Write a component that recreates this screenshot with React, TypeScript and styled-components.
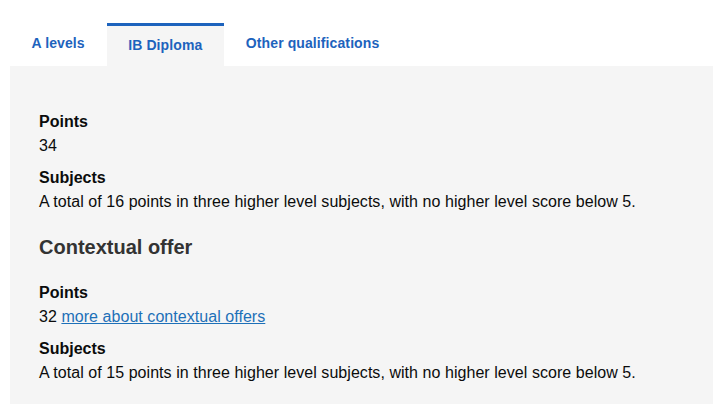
import React from 'react'
import styled, { createGlobalStyle } from 'styled-components'

const GlobalStyle = createGlobalStyle`
  body {
    margin: 0;
    background: #ffffff;
    font-family: 'Liberation Sans', Arial, sans-serif;
    color: #0b0c0c;
  }
`

const Wrapper = styled.div`
  padding: 23px 0 0 10px;
`

const TabList = styled.ul`
  display: flex;
  align-items: flex-start;
  list-style: none;
  margin: 0;
  padding: 0;
`

const Tab = styled.li<{ active?: boolean }>`
  box-sizing: border-box;
  padding: ${({ active }) => (active ? '11px 22px 13px 21.5px' : '12px 22px 0 21.5px')};
  height: ${({ active }) => (active ? '43px' : '38px')};
  border-top: ${({ active }) => (active ? '3px solid #1d63bd' : '0')};
  background: ${({ active }) => (active ? '#f5f5f5' : 'transparent')};
  font-size: 14px;
  line-height: 16px;
  font-weight: 700;
  letter-spacing: 0.1px;
  color: #1d63bd;
  white-space: nowrap;
`

const Panel = styled.div`
  background: #f5f5f5;
  padding: 44px 29px 24px;
`

const Label = styled.div`
  font-size: 16px;
  line-height: 24px;
  font-weight: 700;
  color: #0b0c0c;
`

const Value = styled.div`
  font-size: 16px;
  line-height: 24px;
  letter-spacing: 0.05px;
  color: #0b0c0c;
  margin-bottom: 8px;

  &:last-child {
    margin-bottom: 0;
  }
`

const Link = styled.a`
  color: #1d70b8;
  text-decoration: underline;
`

const Heading = styled.h3`
  margin: 21px 0 22px;
  font-size: 20px;
  line-height: 24px;
  font-weight: 700;
  color: #333333;
`

const App: React.FC = () => {
  return (
    <Wrapper>
      <GlobalStyle />
      <TabList>
        <Tab>A levels</Tab>
        <Tab active>IB Diploma</Tab>
        <Tab>Other qualifications</Tab>
      </TabList>
      <Panel>
        <Label>Points</Label>
        <Value>34</Value>
        <Label>Subjects</Label>
        <Value>A total of 16 points in three higher level subjects, with no higher level score below 5.</Value>
        <Heading>Contextual offer</Heading>
        <Label>Points</Label>
        <Value>
          32 <Link href="#">more about contextual offers</Link>
        </Value>
        <Label>Subjects</Label>
        <Value>A total of 15 points in three higher level subjects, with no higher level score below 5.</Value>
      </Panel>
    </Wrapper>
  )
}

export default App
